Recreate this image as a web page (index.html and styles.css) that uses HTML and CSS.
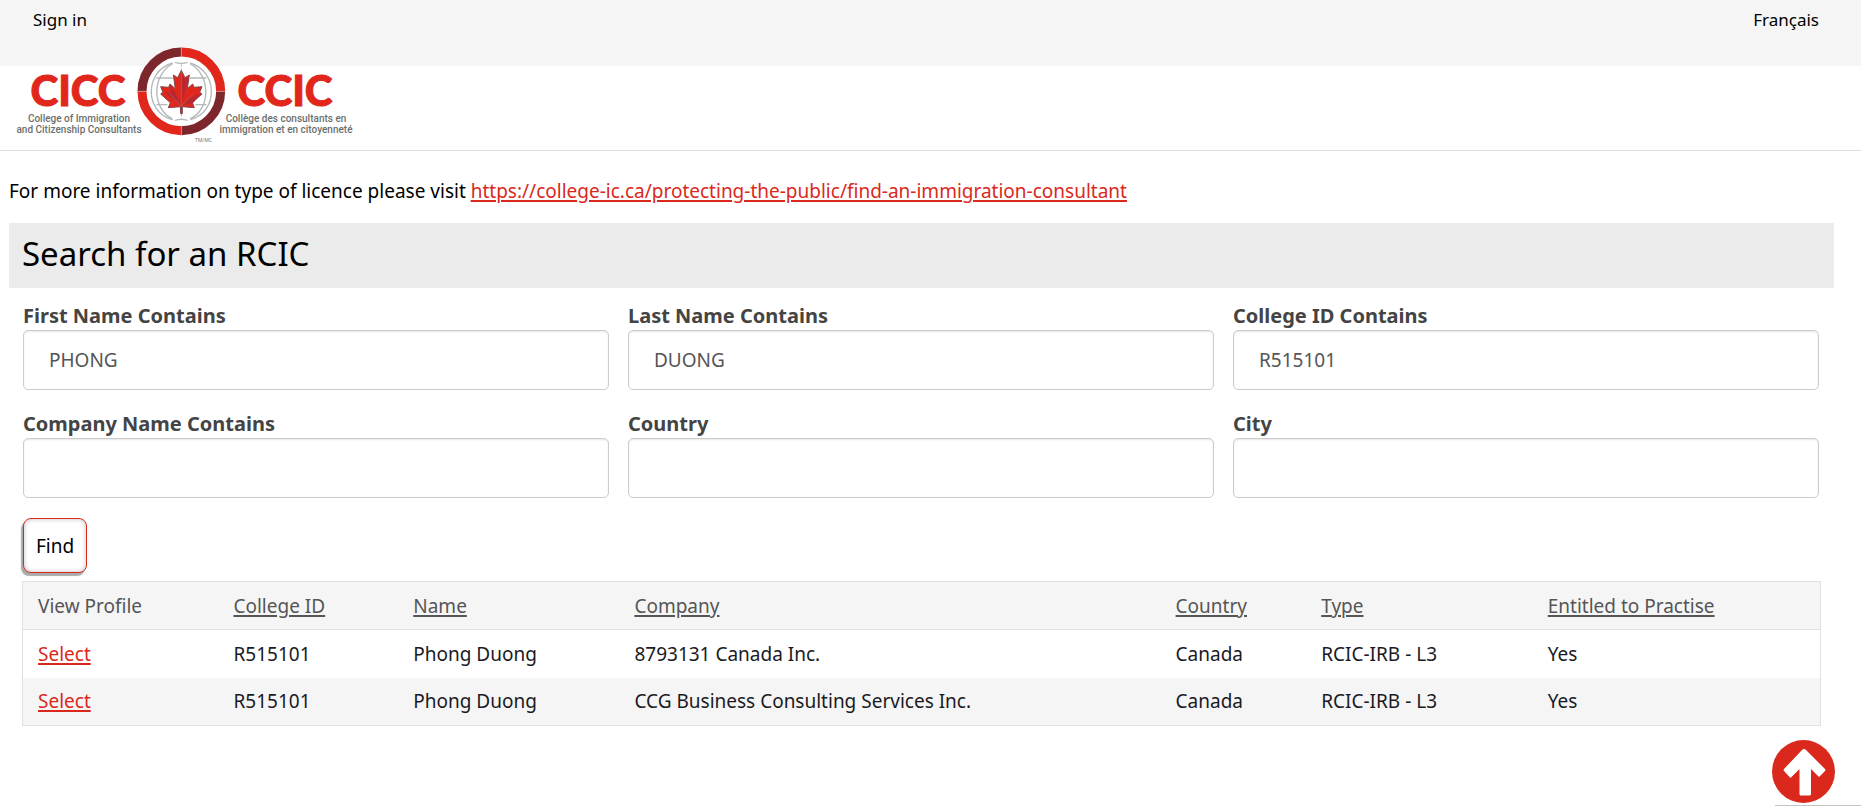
FILE: index.html
```html
<!DOCTYPE html>
<html lang="en">
<head>
<meta charset="utf-8">
<title>Search for an RCIC</title>
<link rel="stylesheet" href="styles.css">
</head>
<body>
<nav class="topbar">
  <a class="topbar-link" href="#signin">Sign in</a>
  <a class="topbar-link" href="#fr" lang="fr">Français</a>
</nav>
<header class="brand">
  <a class="brand-link" href="#home" aria-label="College of Immigration and Citizenship Consultants">
    <svg class="logo" width="340" height="97" viewBox="0 0 340 97">
      <g class="logo-name" text-anchor="middle">
        <text x="63" y="59">CICC</text>
        <text x="270" y="59">CCIC</text>
      </g>
      <g class="logo-sub" text-anchor="middle">
        <text x="64" y="75">College of Immigration</text>
        <text x="64" y="86">and Citizenship Consultants</text>
        <text x="271" y="75">Collège des consultants en</text>
        <text x="271" y="86">immigration et en citoyenneté</text>
      </g>
      <text class="logo-mark" x="180" y="95">TM/MC</text>
      <g transform="translate(105 -7) scale(.33333)">
        <circle cx="184" cy="154" r="131" fill="#fff"/>
        <g fill="none" stroke-width="27">
          <path d="M66 154A118 118 0 0 1 184 36" stroke="#7d262b"/>
          <path d="M184 36A118 118 0 0 1 302 154" stroke="#e1261c"/>
          <path d="M302 154A118 118 0 0 1 184 272" stroke="#7d262b"/>
          <path d="M184 272A118 118 0 0 1 66 154" stroke="#e1261c"/>
        </g>
        <path d="M184 23V50M184 259V285M53 154H79M289 154H315" stroke="#e8a29e" stroke-width="2"/>
        <g fill="none" stroke="#b4b8b8" stroke-width="4">
          <path d="M158 69C75 92 70 215 158 239M210 69C293 92 298 215 210 239"/>
          <path d="M157 72C95 105 95 207 157 236M211 72C273 105 273 207 211 236"/>
          <path d="M165 67Q184 73 203 67M165 241Q184 235 203 241M109 114H158M210 114H259M109 194H142M226 194H259"/>
          <path d="M184 73V90M184 222V240" stroke-dasharray="7 5" stroke-width="3"/>
        </g>
        <path d="M184 91L173 113L160 105L166 146L150 132L146 142L122 140L129 157L122 162L151 188L145 203L181 200L182 221H187L187 200L223 203L217 188L246 162L239 157L246 140L222 142L218 132L202 146L208 105L195 113Z" fill="#e1261c" stroke="#7d4547" stroke-width="3"/>
        <path d="M184 194L163 153L150 137L153 162L135 152L147 170ZM184 196L206 112L194 117L185 101ZM186 196L212 173L239 161L219 190Z" fill="#b92732"/>
        <path d="M184 92V198L150 163M184 198L218 163" fill="none" stroke="#a66b6a" stroke-width="2"/>
      </g>
    </svg>
  </a>
</header>
<main class="content">
  <p class="info">For more information on type of licence please visit <a class="link" href="#licence">https://college-ic.ca/protecting-the-public/find-an-immigration-consultant</a></p>
  <h1 class="title">Search for an RCIC</h1>
  <form class="search">
    <div class="fields">
      <div class="field"><label for="first">First Name Contains</label><input id="first" type="text" value="PHONG"></div>
      <div class="field"><label for="last">Last Name Contains</label><input id="last" type="text" value="DUONG"></div>
      <div class="field"><label for="cid">College ID Contains</label><input id="cid" type="text" value="R515101"></div>
      <div class="field"><label for="company">Company Name Contains</label><input id="company" type="text"></div>
      <div class="field"><label for="country">Country</label><input id="country" type="text"></div>
      <div class="field"><label for="city">City</label><input id="city" type="text"></div>
    </div>
    <button class="find" type="button">Find</button>
  </form>
  <table class="results">
    <colgroup><col class="c-view"><col class="c-id"><col class="c-name"><col class="c-company"><col class="c-country"><col class="c-type"><col class="c-entitled"></colgroup>
    <thead>
      <tr><th>View Profile</th><th><a href="#id">College ID</a></th><th><a href="#name">Name</a></th><th><a href="#co">Company</a></th><th><a href="#ctry">Country</a></th><th><a href="#type">Type</a></th><th><a href="#ent">Entitled to Practise</a></th></tr>
    </thead>
    <tbody>
      <tr><td><a class="link" href="#p1">Select</a></td><td>R515101</td><td>Phong Duong</td><td>8793131 Canada Inc.</td><td>Canada</td><td>RCIC-IRB - L3</td><td>Yes</td></tr>
      <tr><td><a class="link" href="#p2">Select</a></td><td>R515101</td><td>Phong Duong</td><td>CCG Business Consulting Services Inc.</td><td>Canada</td><td>RCIC-IRB - L3</td><td>Yes</td></tr>
    </tbody>
  </table>
</main>
<a class="to-top" href="#top" aria-label="Back to top">
  <svg width="63" height="63" viewBox="0 0 63 63"><circle cx="31.500" cy="31.500" r="31.500" fill="#da291c"/><path d="M32 9Q33 9 34 10L53 29Q54 30 53 31L47 37L39 29V54Q39 55.500 37.500 55.500H29Q27.500 55.500 27.500 54V29L18.500 38L12 31Q11 30 12 29L30 10Q31 9 32 9Z" fill="#fff"/></svg>
</a>
<div class="status-edge"></div>
</body>
</html>
```
FILE: styles.css
```css
* { box-sizing: border-box; }

body {
  margin: 0;
  background: #fff;
  color: #000;
  font-family: "Noto Sans", sans-serif;
  font-size: 19px;
  line-height: 24px;
}

.topbar {
  display: flex;
  justify-content: space-between;
  height: 66px;
  padding: 8px 42px 0 33px;
  background: #f5f5f5;
}

.topbar-link {
  color: #000;
  font-size: 17px;
  text-decoration: none;
}

.brand {
  display: flex;
  align-items: flex-start;
  height: 85px;
  padding-left: 15px;
  border-bottom: 1px solid #dcdcdc;
}

.brand-link {
  display: block;
  margin-top: -19px;
}

.logo {
  display: block;
  position: relative;
}

.logo-name {
  fill: #e1261c;
  stroke: #e1261c;
  stroke-width: 1px;
  font-family: Lato, sans-serif;
  font-size: 42px;
  font-weight: 900;
}

.logo-sub {
  fill: #6b6f6e;
  font-family: Roboto, sans-serif;
  font-size: 10px;
  font-weight: 500;
}

.logo-mark {
  fill: #777;
  font-family: Roboto, sans-serif;
  font-size: 5px;
}

.content { padding: 28px 27px 0 9px; }

.info { margin: 0 0 20px; }

.link { color: #da291c; }

.link, .results th a {
  text-decoration-thickness: 2px;
  text-underline-offset: 2px;
}

.title {
  margin: 0;
  padding: 11px 13px 14px;
  background: #ebebeb;
  font-size: 33px;
  font-weight: 400;
  line-height: 40px;
}

.search { padding: 14px 15px 8px 14px; }

.fields {
  display: grid;
  grid-template-columns: repeat(3, 1fr);
  gap: 20px 19px;
}

.field label {
  display: block;
  height: 28px;
  padding-top: 2px;
  color: #444;
  font-size: 20px;
  font-weight: 700;
}

.field input {
  display: block;
  width: 100%;
  height: 60px;
  padding: 0 25px;
  border: 1px solid #ccc;
  border-radius: 5px;
  background: #fff;
  box-shadow: inset 0 1px 2px rgba(0, 0, 0, .1);
  color: #555;
  font: inherit;
}

.find {
  display: block;
  height: 55px;
  margin-top: 20px;
  padding: 0 12px;
  border: 1px solid #da291c;
  border-radius: 8px;
  background: #fff;
  box-shadow: -2px 3px 1px #aaa, inset 0 0 5px rgba(0, 0, 0, .25);
  color: #000;
  font: inherit;
}

.results {
  width: calc(100% - 26px);
  margin-left: 13px;
  border: 1px solid #e1e1e1;
  border-collapse: collapse;
  table-layout: fixed;
  color: #1a1a24;
}

.c-view { width: 10.9%; }
.c-id { width: 10%; }
.c-name { width: 12.3%; }
.c-company { width: 30.1%; }
.c-country { width: 8.1%; }
.c-type { width: 12.6%; }

.results th, .results td {
  height: 48px;
  padding: 0 15px;
  text-align: left;
  font-weight: 400;
}

.results th {
  border-bottom: 1px solid #e1e1e1;
  background: #f5f5f5;
  color: #555;
}

.results th a { color: inherit; }

.results tbody tr:nth-child(even) { background: #f5f5f5; }

.to-top {
  position: fixed;
  right: 26px;
  bottom: 3px;
  height: 63px;
}

.status-edge {
  position: fixed;
  right: 0;
  bottom: 0;
  width: 86px;
  height: 1px;
  background: #c4c4c4;
}
```
